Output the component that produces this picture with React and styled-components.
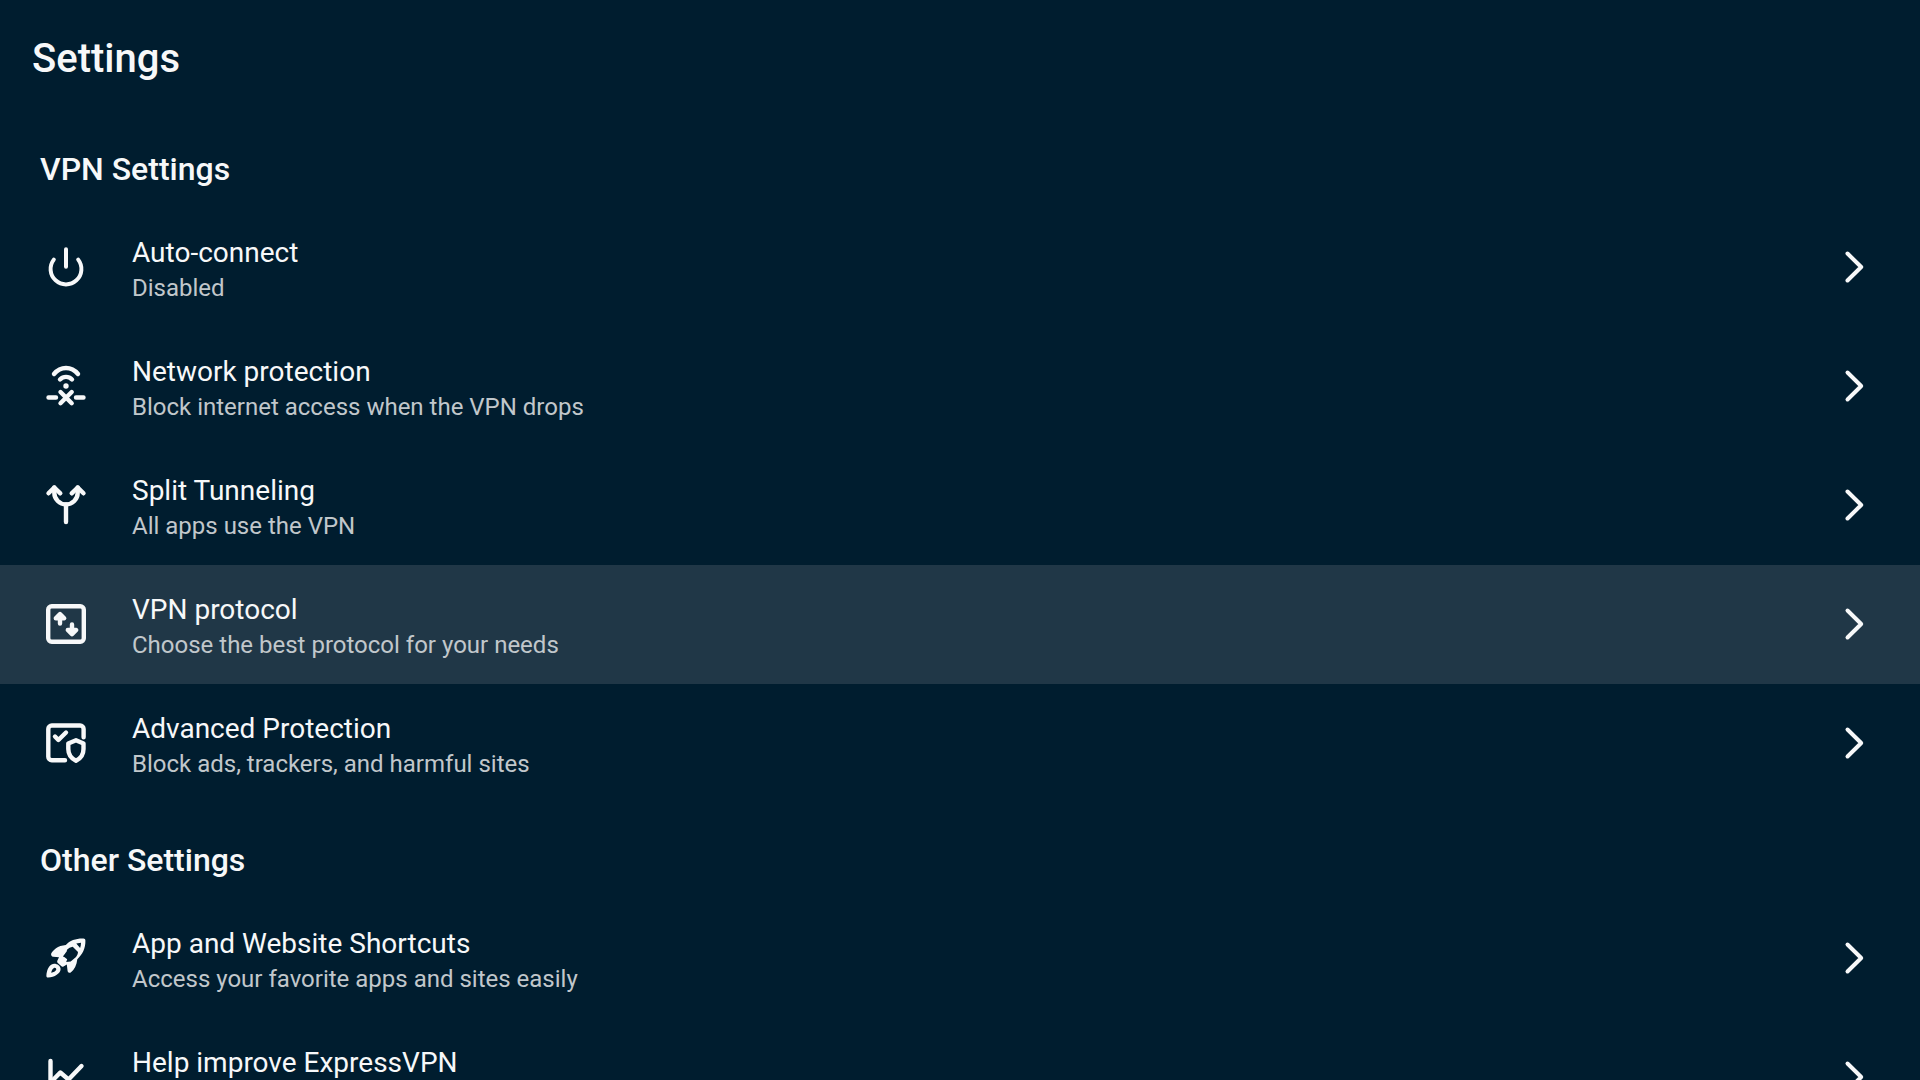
import React from 'react'
import styled, { createGlobalStyle } from 'styled-components'

const PowerIcon = () => (
  <Icon viewBox="0 0 48 48" aria-hidden="true">
    <path d="M24 6.2V23.7" />
    <path d="M11.8 16.6A15.4 15.4 0 1 0 36.2 16.6" />
  </Icon>
);

const NetworkIcon = () => (
  <Icon viewBox="0 0 48 48" strokeWidth="4.4" aria-hidden="true">
    <path d="M12 12C15.3 8 19.3 6 24 6C28.7 6 32.7 8 36 12" />
    <path d="M18 17.500C21.400 14 26.600 14 30 17.500" />
    <circle cx="24" cy="24" r="2.700" fill="currentColor" stroke="none" />
    <path d="M18.500 30L29.700 41.200M29.700 30L18.500 41.200" />
    <path d="M6.500 35.500H14M34 35.500H41.500" />
  </Icon>
);

const SplitIcon = () => (
  <Icon viewBox="0 0 48 48" strokeWidth="4.4" aria-hidden="true">
    <path d="M24 23.500V41" />
    <path d="M12.300 6.500V11.700A11.700 11.700 0 0 0 35.700 11.700V6.500" />
    <path d="M6.500 12.300L12.300 6.500L18.300 12.300" />
    <path d="M29.700 12.300L35.700 6.500L41.500 12.300" />
  </Icon>
);

const ProtocolIcon = () => (
  <Icon viewBox="0 0 48 48" strokeWidth="4.4" aria-hidden="true">
    <rect x="6.200" y="6.200" width="35.600" height="35.600" rx="3.500" />
    <path d="M18 15V23.500M13.800 18.300L18 14.100L22.200 18.300Z" />
    <path d="M30 24.500V33.500M25.800 30L30 34.200L34.200 30Z" />
  </Icon>
);

const AdvancedIcon = () => (
  <Icon viewBox="0 0 48 48" strokeWidth="4.4" aria-hidden="true">
    <path d="M41.600 18.300V10A3.500 3.500 0 0 0 38.100 6.500H9.800A3.500 3.500 0 0 0 6.300 10V37.800A3.500 3.500 0 0 0 9.800 41.300H23" />
    <path d="M13 17.500L16.400 21L24 13.500" />
    <path d="M34 21.200L41.500 24.500V30C41.500 35.500 38.700 39.500 34 41.700C29.300 39.500 26.300 35.500 26.300 30V24.500Z" />
  </Icon>
);

const RocketIcon = () => (
  <Icon viewBox="0 0 48 48" aria-hidden="true">
    <g fill="currentColor" fillRule="evenodd" stroke="none">
      <path d="M41.5 4.600C34 4.400 28 6.500 23.800 11C20 11.300 16.500 12.500 14 14.200C12 15.800 10.300 17.500 9.300 19.200C8.600 20.800 9.600 22.600 11.200 22.800L17 23.300L15.300 26.800C15 27.800 15.200 28.400 15.800 29L19.400 32.300C20 32.800 20.800 32.800 21.500 32.400L24.800 30.500L25.600 37C25.900 38.800 27.800 39.400 29 38.200C32.300 35.500 34.800 31 35.300 25.200C40.500 20.500 43.600 14 43.400 6.500C43.300 5.300 42.600 4.600 41.500 4.600ZM30.700 12.800L36 18C35.800 20 35.200 21.600 34 22.900L28.700 27.600L24.200 28L25.200 25.300L22.300 23L20.900 22.500L24.800 17.300L25 15.800C26.500 14.200 28.500 13.200 30.700 12.800ZM34.300 9.600L39 8.800C39 10.700 38.700 12.300 38.100 14Z" />
      <path d="M6.200 43.600C4.800 43.600 4.200 42.600 4.400 41.200C4.800 36.500 6.400 32.200 9.600 30.400C13 28.400 18.600 31 18.600 35C18.600 39.500 12.500 43.200 6.200 43.600ZM9.200 38.800C11.600 38.400 13.600 37.300 14.200 35.800C14.600 34.600 13.400 33.500 12 33.900C10.600 34.400 9.600 36.400 9.200 38.800Z" />
    </g>
  </Icon>
);

const ChartIcon = () => (
  <Icon viewBox="0 0 48 48" strokeWidth="4.4" aria-hidden="true">
    <path d="M8.500 8V40H40" />
    <path d="M9 29L18.300 19.500L26.500 26.500L39.500 13" />
  </Icon>
);

const sections = [
  {
    title: 'VPN Settings',
    items: [
      { title: 'Auto-connect', text: 'Disabled', icon: <PowerIcon /> },
      { title: 'Network protection', text: 'Block internet access when the VPN drops', icon: <NetworkIcon /> },
      { title: 'Split Tunneling', text: 'All apps use the VPN', icon: <SplitIcon /> },
      { title: 'VPN protocol', text: 'Choose the best protocol for your needs', icon: <ProtocolIcon />, active: true },
      { title: 'Advanced Protection', text: 'Block ads, trackers, and harmful sites', icon: <AdvancedIcon /> },
    ],
  },
  {
    title: 'Other Settings',
    items: [
      { title: 'App and Website Shortcuts', text: 'Access your favorite apps and sites easily', icon: <RocketIcon /> },
      { title: 'Help improve ExpressVPN', icon: <ChartIcon /> },
    ],
  },
];

export default function App() {
  return (
    <Page>
      <GlobalStyle />
      <Title>Settings</Title>
      {sections.map((section) => (
        <section key={section.title}>
          <SectionTitle>{section.title}</SectionTitle>
          {section.items.map((item) => (
            <Row key={item.title} type="button" $active={item.active}>
              {item.icon}
              <Label>
                <span className="title">{item.title}</span>
                {item.text && <span className="text">{item.text}</span>}
              </Label>
              <Icon viewBox="0 0 48 48" aria-hidden="true">
                <path d="M17.500 10.500L31.200 24L17.500 37.500" />
              </Icon>
            </Row>
          ))}
        </section>
      ))}
    </Page>
  )
}

const GlobalStyle = createGlobalStyle`
  *{
    box-sizing: border-box;
  }
  body{
    margin: 0;
    background-color: #001d2f;
  }
`;

const Page = styled.main`
  height: 100vh;
  overflow-y: auto;
  scrollbar-width: none;
  background-color: #001d2f;
  color: #f7f8f9;
  font-family: Roboto, sans-serif;
`;

const Title = styled.h1`
  margin: 0;
  padding: 35px 32px 29px;
  font-size: 40px;
  font-weight: 500;
  line-height: 48px;
`;

const SectionTitle = styled.h2`
  margin: 0;
  padding: 37px 40px 19px;
  font-size: 32px;
  font-weight: 500;
  line-height: 40px;
`;

const Row = styled.button`
  display: flex;
  align-items: center;
  gap: 42px;
  width: 100%;
  height: 119px;
  padding: 0 42px 1px;
  border: none;
  background-color: ${({ $active }) => ($active ? '#203747' : 'transparent')};
  color: inherit;
  font-family: inherit;
  text-align: left;
  cursor: pointer;
`;

const Label = styled.span`
  display: flex;
  flex: 1;
  flex-direction: column;
  align-self: stretch;
  padding-top: 27px;
  .title{
    font-size: 28px;
    line-height: 36px;
  }
  .text{
    font-size: 24px;
    line-height: 34px;
    color: #c1c7cb;
  }
`;

const Icon = styled.svg.attrs(({ strokeWidth = 4 }) => ({ strokeWidth }))`
  flex: none;
  width: 48px;
  height: 48px;
  fill: none;
  stroke: currentColor;
  stroke-linecap: round;
  stroke-linejoin: round;
`;
